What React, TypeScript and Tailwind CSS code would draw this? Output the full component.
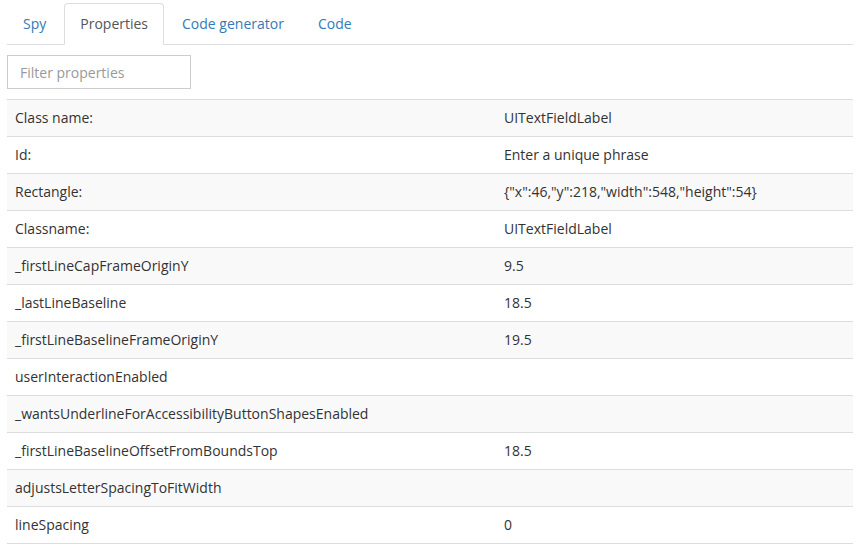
import React, { useState } from 'react';

const rows: [string, string][] = [
  ['Class name:', 'UITextFieldLabel'],
  ['Id:', 'Enter a unique phrase'],
  ['Rectangle:', '{"x":46,"y":218,"width":548,"height":54}'],
  ['Classname:', 'UITextFieldLabel'],
  ['_firstLineCapFrameOriginY', '9.5'],
  ['_lastLineBaseline', '18.5'],
  ['_firstLineBaselineFrameOriginY', '19.5'],
  ['userInteractionEnabled', ''],
  ['_wantsUnderlineForAccessibilityButtonShapesEnabled', ''],
  ['_firstLineBaselineOffsetFromBoundsTop', '18.5'],
  ['adjustsLetterSpacingToFitWidth', ''],
  ['lineSpacing', '0'],
];

const tabs = ['Spy', 'Properties', 'Code generator', 'Code'];

export default function App() {
  const [active, setActive] = useState('Properties');
  const [filter, setFilter] = useState('');

  return (
    <div className="min-h-screen bg-white px-[7px] pt-[3px] text-[14px] leading-[20px] text-[#333] font-['Open_Sans',sans-serif]">
      {/* tabs */}
      <ul className="flex w-[846px] border-b border-[#ddd]">
        {tabs.map((t) => (
          <li key={t} className="-mb-px mr-[2px]">
            <button
              onClick={() => setActive(t)}
              className={
                t === active
                  ? 'block rounded-t-[4px] border border-[#ddd] border-b-transparent bg-white px-[15px] py-[10px] text-[#555]'
                  : 'block rounded-t-[4px] border border-transparent px-[15px] py-[10px] text-[#337ab7]'
              }
            >
              {t}
            </button>
          </li>
        ))}
      </ul>

      {/* filter */}
      <input
        value={filter}
        onChange={(e) => setFilter(e.target.value)}
        placeholder="Filter properties"
        className="mt-[10px] block h-[34px] w-[184px] border border-[#ccc] px-[12px] py-[6px] text-[14px] text-[#555] placeholder-[#999] outline-none"
      />

      {/* properties table */}
      <table className="mt-[10px] w-[846px] border-collapse">
        <tbody>
          {rows
            .filter(([k]) => k.toLowerCase().includes(filter.toLowerCase()))
            .map(([k, v], i) => (
              <tr key={k} className={i % 2 === 0 ? 'bg-[#f9f9f9]' : 'bg-white'}>
                <td className="w-[489px] border-t border-b border-[#ddd] p-[8px] align-top">{k}</td>
                <td className="border-t border-b border-[#ddd] p-[8px] align-top">{v}</td>
              </tr>
            ))}
        </tbody>
      </table>
    </div>
  );
}
